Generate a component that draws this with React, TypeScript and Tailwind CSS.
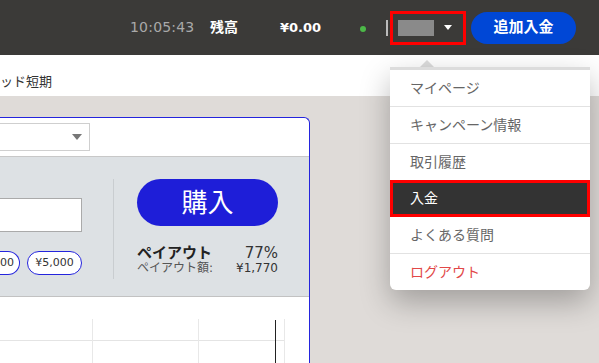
import React from "react";

const font = { fontFamily: '"DejaVu Sans", "Noto Sans CJK JP", sans-serif' };

const menuItems = ["マイページ", "キャンペーン情報", "取引履歴", "入金", "よくある質問", "ログアウト"];

const App = () => {
  return (
    <div className="relative w-[599px] h-[363px] overflow-hidden bg-[#dfdbd8]" style={font}>
      {/* header */}
      <header className="h-[55px] bg-[#3b3a38] flex items-center pr-[23px]">
        <span className="ml-[130px] w-[80px] text-[14px] text-[#a9a9a9] tracking-[0.2px]">10:05:43</span>
        <span className="w-[70px] text-[14px] font-bold text-white">残高</span>
        <span className="w-[80px] text-[13px] font-bold text-white">¥0.00</span>
        <span className="w-[6px] h-[6px] rounded-full bg-[#4cb848] mt-[2px]" />
        <span className="ml-[20px] w-[2px] h-[16px] bg-[#bbb]" />
        <div className="ml-[2px] w-[76px] h-[34px] border-[3px] border-[#ff0000] flex items-center pl-[5px]">
          <span className="w-[36px] h-[16px] bg-[#8a8a8a]" />
          <span className="ml-[10px] w-0 h-0 border-l-[4px] border-r-[4px] border-t-[5px] border-l-transparent border-r-transparent border-t-white" />
        </div>
        <button className="ml-[5px] w-[105px] h-[32px] rounded-full bg-[#0047d6] text-white font-bold text-[15px]">
          追加入金
        </button>
      </header>

      {/* title strip */}
      <div className="h-[41px] bg-white flex items-end pb-[4px]">
        <span className="text-[13px] text-[#333] leading-[20px]">ッド短期</span>
      </div>

      {/* trade panel */}
      <div className="mt-[21px] w-[310px] bg-white border-t border-r border-[#2424dd] rounded-tr-[6px]">
        <div className="h-[39px] flex items-center border-b border-[#c8c8c8]">
          <div className="w-[90px] h-[28px] border border-[#cfcfcf] border-l-0 flex items-center justify-end pr-[7px]">
            <span className="w-0 h-0 border-l-[5px] border-r-[5px] border-t-[6px] border-l-transparent border-r-transparent border-t-[#777]" />
          </div>
        </div>
        <div className="h-[140px] bg-[#dde1e4] flex border-b border-[#c2c2c2]">
          <div className="w-[114px] border-r border-[#c9cdd0] mt-[22px] mb-[17px] flex flex-col">
            <div className="mt-[19px] w-[82px] h-[34px] bg-white border border-[#aaa] border-l-0" />
            <div className="mt-[19px] flex gap-[7px]">
              <span className="w-[20px] h-[24px] bg-white border border-[#2424dd] border-l-0 rounded-r-full text-[11px] text-[#333] flex items-center">00</span>
              <span className="w-[55px] h-[24px] bg-white border border-[#2424dd] rounded-full text-[11px] text-[#333] flex items-center justify-center">¥5,000</span>
            </div>
          </div>
          <div className="ml-[23px] w-[141px] pt-[22px]">
            <button className="w-[141px] h-[47px] rounded-full bg-[#1e1ed8] text-white text-[26px] leading-none">
              購入
            </button>
            <div className="mt-[19px] flex justify-between items-baseline leading-[16px]">
              <span className="text-[15px] font-bold text-[#222]">ペイアウト</span>
              <span className="text-[15px] text-[#333]">77%</span>
            </div>
            <div className="flex justify-between items-baseline leading-[14px]">
              <span className="text-[12px] text-[#555]">ペイアウト額:</span>
              <span className="text-[12px] text-[#333]">¥1,770</span>
            </div>
          </div>
        </div>
        {/* chart */}
        <div className="h-[70px] pt-[22px] pr-[24px]">
          <div className="relative h-full">
            <div className="absolute left-0 right-0 top-[21px] h-px bg-[#e4e4e4]" />
            <div className="absolute left-[92px] top-0 bottom-0 w-px bg-[#e8e8e8]" />
            <div className="absolute left-[198px] top-0 bottom-0 w-px bg-[#e8e8e8]" />
            <div className="absolute right-0 top-0 bottom-0 w-px bg-[#e8e8e8]" />
            <div className="absolute left-[275px] top-[1px] bottom-0 w-px bg-[#222]" />
          </div>
        </div>
      </div>

      {/* dropdown menu */}
      <div className="absolute left-[390px] top-[60px] w-[200px]">
        <div className="ml-[30px] w-0 h-0 border-l-[7px] border-r-[7px] border-b-[7px] border-l-transparent border-r-transparent border-b-[#dcdcdc]" />
        <div className="bg-white border-t-[3px] border-[#dcdcdc] rounded-b-[6px] shadow-[0_12px_30px_rgba(0,0,0,0.28)] overflow-hidden">
          {menuItems.map((item, i) => {
            const active = item === "入金";
            const logout = item === "ログアウト";
            return (
              <div
                key={item}
                className={
                  active
                    ? "h-[37px] flex items-center pl-[17px] bg-[#333] border-[3px] border-[#ff0000] text-white text-[14px]"
                    : i < menuItems.length - 1 && menuItems[i + 1] !== "入金"
                    ? "h-[37px] flex items-center pl-[20px] border-b border-[#e2e2e2] text-[14px] " + (logout ? "text-[#e24848]" : "text-[#666]")
                    : "h-[36px] flex items-center pl-[20px] text-[14px] " + (logout ? "text-[#e24848]" : "text-[#666]")
                }
              >
                {item}
              </div>
            );
          })}
        </div>
      </div>
    </div>
  );
};

export default App;
